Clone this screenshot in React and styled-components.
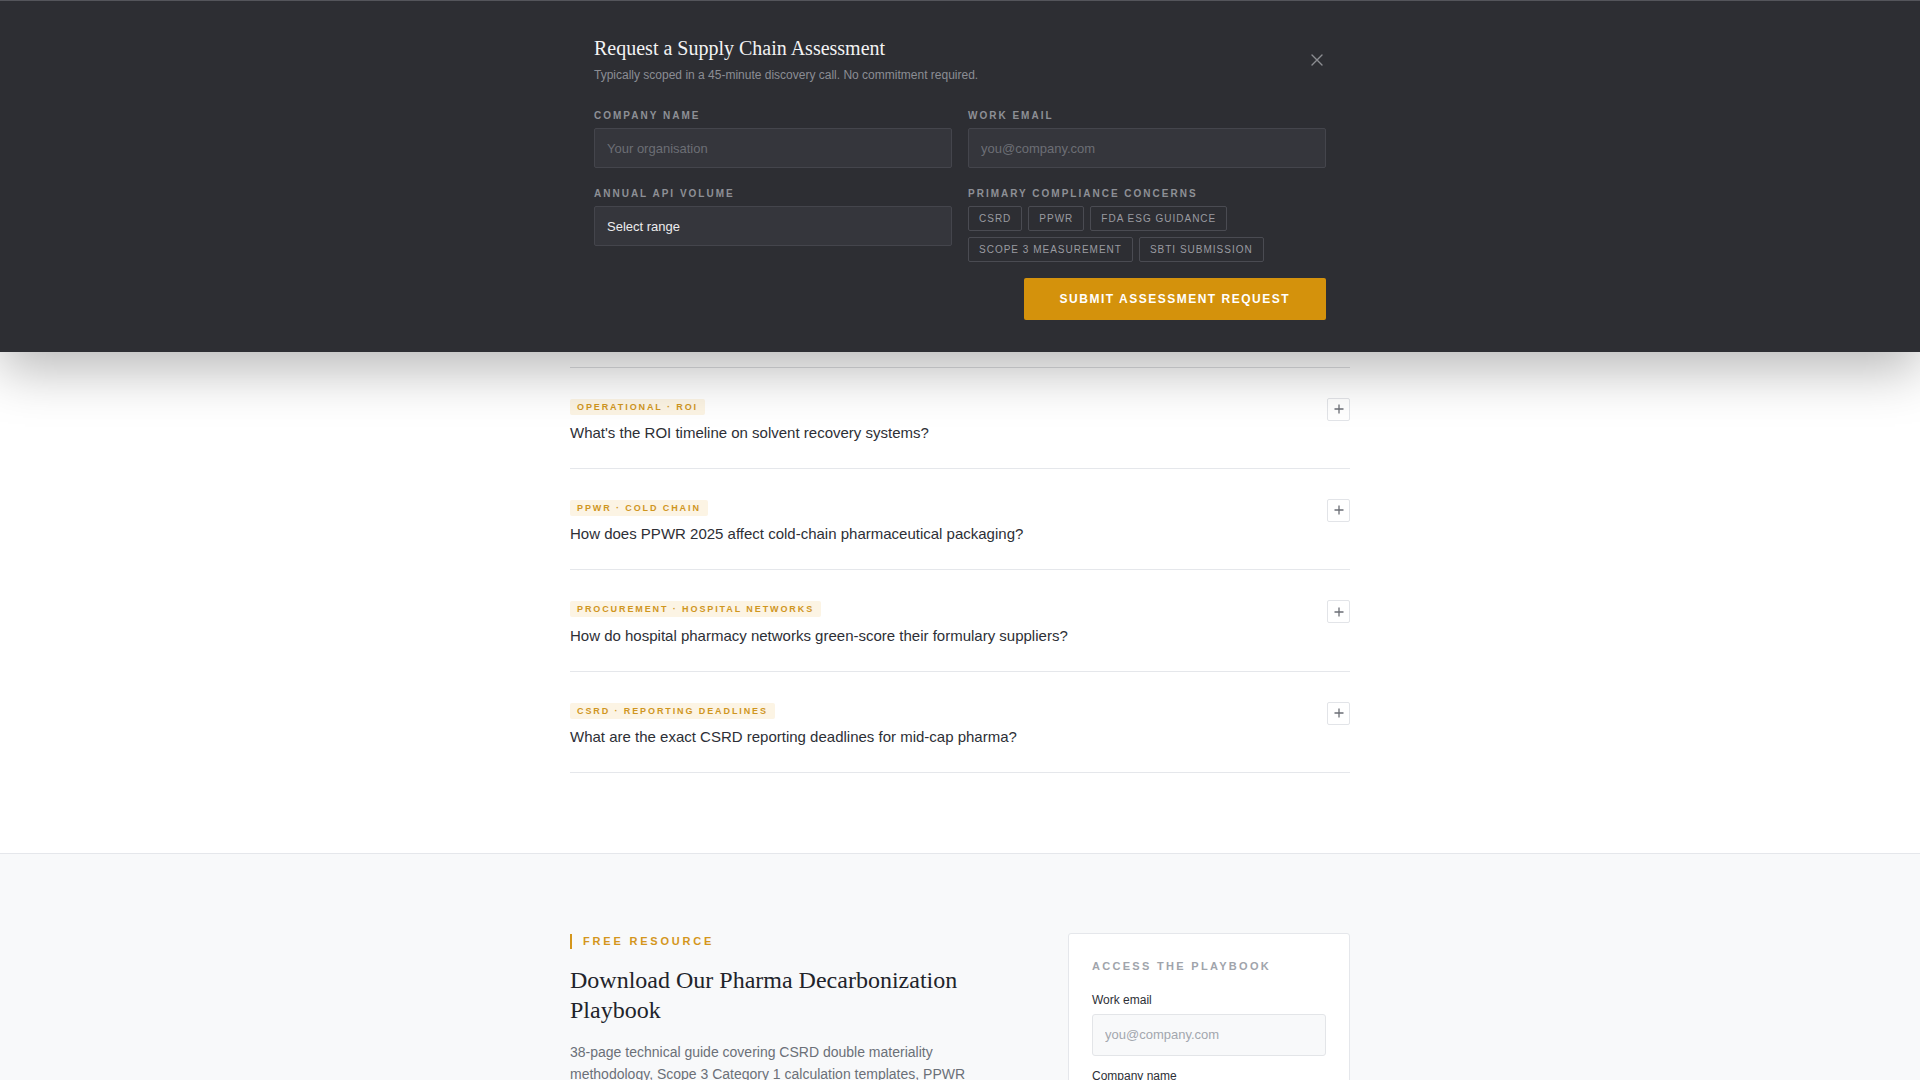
import React from "react";
import styled, { createGlobalStyle } from "styled-components";

const GlobalStyle = createGlobalStyle`
  *, *::before, *::after { box-sizing: border-box; }
  html, body { margin: 0; padding: 0; background: #ffffff; }
  body {
    font-family: "Liberation Sans", Arial, Helvetica, sans-serif;
    color: #2d2f36;
    -webkit-font-smoothing: antialiased;
  }
`;

/* ---------- Assessment request drawer ---------- */

const Drawer = styled.section`
  position: relative;
  z-index: 20;
  background: #2d2e33;
  border-top: 1px solid #54555b;
  box-shadow: 0 18px 50px rgba(0, 0, 0, 0.28);
  padding: 34px 0 32px;
`;

const DrawerInner = styled.div`
  width: 732px;
  margin: 0 auto;
`;

const DrawerHeader = styled.div`
  display: flex;
  justify-content: space-between;
  align-items: center;
`;

const DrawerTitle = styled.h2`
  margin: 0;
  font-family: "Liberation Serif", "Times New Roman", serif;
  font-weight: 400;
  font-size: 20px;
  line-height: 26px;
  color: #f3f3f4;
`;

const DrawerSub = styled.p`
  margin: 5px 0 0;
  font-size: 12px;
  line-height: 18px;
  color: #8b8d94;
`;

const CloseButton = styled.button`
  width: 16px;
  height: 16px;
  margin-right: 1px;
  padding: 0;
  border: 0;
  background: none;
  color: #8c8d92;
  display: flex;
  align-items: center;
  justify-content: center;
  cursor: pointer;
`;

const FormGrid = styled.div`
  margin-top: 25px;
  display: grid;
  grid-template-columns: 1fr 1fr;
  column-gap: 16px;
  row-gap: 19px;
  align-items: start;
`;

const Field = styled.div`
  display: flex;
  flex-direction: column;
`;

const DarkLabel = styled.label`
  font-size: 10px;
  line-height: 14px;
  font-weight: 700;
  letter-spacing: 2px;
  text-transform: uppercase;
  color: #8e9096;
  margin-bottom: 5px;
`;

const darkControl = `
  height: 40px;
  width: 100%;
  background: #35363c;
  border: 1px solid #44454c;
  border-radius: 2px;
  padding: 0 12px;
  font-family: "Liberation Sans", Arial, sans-serif;
  font-size: 13px;
  outline: none;
`;

const DarkInput = styled.input`
  ${darkControl}
  color: #e8e8ea;
  &::placeholder { color: #6c6e75; }
`;

const DarkSelect = styled.select`
  ${darkControl}
  appearance: none;
  -webkit-appearance: none;
  color: #ececee;
`;

const ChipRow = styled.div`
  display: flex;
  flex-wrap: wrap;
  gap: 6px;
`;

const Chip = styled.button`
  height: 25px;
  padding: 0 10px;
  border: 1px solid #4a4b52;
  border-radius: 2px;
  background: transparent;
  color: #9a9ba1;
  font-family: "Liberation Sans", Arial, sans-serif;
  font-size: 10px;
  letter-spacing: 1px;
  text-transform: uppercase;
  cursor: pointer;
`;

const SubmitRow = styled.div`
  display: flex;
  justify-content: flex-end;
  margin-top: 16px;
`;

const SubmitButton = styled.button`
  height: 42px;
  padding: 0 36px;
  background: #d4920c;
  border: 0;
  border-radius: 2px;
  color: #ffffff;
  font-family: "Liberation Sans", Arial, sans-serif;
  font-weight: 700;
  font-size: 12px;
  letter-spacing: 1.5px;
  text-transform: uppercase;
  cursor: pointer;
`;

/* ---------- FAQ list ---------- */

const FaqSection = styled.section`
  padding: 14.5px 0 80px;
`;

const FaqList = styled.div`
  width: 780px;
  margin: 0 auto;
  border-top: 1px solid #dcdde0;
`;

const FaqItem = styled.div`
  display: flex;
  justify-content: space-between;
  align-items: flex-start;
  padding: 31px 0 24px;
  border-bottom: 1px solid #e5e7eb;
`;

const FaqBody = styled.div`
  display: flex;
  flex-direction: column;
  align-items: flex-start;
`;

const Tag = styled.span`
  height: 16px;
  line-height: 16px;
  padding: 0 7px;
  background: #fcf4e4;
  color: #d0961e;
  font-size: 9px;
  font-weight: 700;
  letter-spacing: 1.9px;
  text-transform: uppercase;
  border-radius: 2px;
`;

const Question = styled.h3`
  margin: 7.5px 0 0;
  font-size: 15px;
  line-height: 21.85px;
  font-weight: 400;
  color: #2d2f36;
`;

const PlusButton = styled.button`
  width: 23px;
  height: 23px;
  margin-top: -1px;
  padding: 0;
  border: 1px solid #e2e4e8;
  border-radius: 2px;
  background: #ffffff;
  color: #6b6e75;
  display: flex;
  align-items: center;
  justify-content: center;
  cursor: pointer;
`;

/* ---------- Playbook download ---------- */

const ResourceSection = styled.section`
  background: #f8f9fa;
  border-top: 1px solid #e5e7eb;
  padding: 79px 0 80px;
`;

const ResourceInner = styled.div`
  width: 780px;
  margin: 0 auto;
  display: grid;
  grid-template-columns: 1fr 282px;
  column-gap: 64px;
  align-items: start;
`;

const ResourceCopy = styled.div`
  padding-top: 1px;
`;

const Eyebrow = styled.div`
  border-left: 2px solid #d4961c;
  padding-left: 11px;
  font-size: 11px;
  line-height: 15px;
  font-weight: 700;
  letter-spacing: 2.8px;
  text-transform: uppercase;
  color: #d4961c;
`;

const ResourceTitle = styled.h2`
  margin: 16px 0 0;
  font-family: "Liberation Serif", "Times New Roman", serif;
  font-weight: 400;
  font-size: 24px;
  line-height: 30px;
  color: #22242a;
`;

const ResourceText = styled.p`
  margin: 16px 0 0;
  font-size: 14px;
  line-height: 22px;
  color: #6b7078;
`;

const Card = styled.form`
  background: #ffffff;
  border: 1px solid #e5e7eb;
  border-radius: 3px;
  padding: 25px 23px 24px;
`;

const CardEyebrow = styled.div`
  font-size: 11px;
  line-height: 15px;
  font-weight: 700;
  letter-spacing: 2.3px;
  text-transform: uppercase;
  color: #a0a4ab;
`;

const CardField = styled.div`
  display: flex;
  flex-direction: column;
  margin-top: ${(p) => (p.$first ? "18px" : "12px")};
`;

const CardLabel = styled.label`
  font-size: 12px;
  line-height: 16px;
  color: #2d2f36;
  margin-bottom: 6px;
`;

const CardInput = styled.input`
  height: 42px;
  width: 100%;
  background: #f8f9fa;
  border: 1px solid #e3e5e8;
  border-radius: 3px;
  padding: 0 12px;
  font-family: "Liberation Sans", Arial, sans-serif;
  font-size: 13px;
  color: #2d2f36;
  outline: none;
  &::placeholder { color: #a3a7ae; }
`;

const CardButton = styled.button`
  margin-top: 16px;
  width: 100%;
  height: 42px;
  border: 0;
  border-radius: 2px;
  background: #2d2e33;
  color: #ffffff;
  font-family: "Liberation Sans", Arial, sans-serif;
  font-size: 11px;
  font-weight: 700;
  letter-spacing: 1.5px;
  text-transform: uppercase;
`;

const CloseIcon = () => (
  <svg width="12" height="12" viewBox="0 0 12 12" fill="none">
    <path d="M1 1L11 11M11 1L1 11" stroke="currentColor" strokeWidth="1.4" strokeLinecap="round" />
  </svg>
);

const PlusIcon = () => (
  <svg width="10" height="10" viewBox="0 0 10 10" fill="none">
    <path d="M5 0.5V9.5M0.5 5H9.5" stroke="currentColor" strokeWidth="1.3" />
  </svg>
);

const concerns = [
  "CSRD",
  "PPWR",
  "FDA ESG Guidance",
  "Scope 3 Measurement",
  "SBTi Submission",
];

const faqs = [
  { tag: "Operational · ROI", q: "What's the ROI timeline on solvent recovery systems?" },
  { tag: "PPWR · Cold Chain", q: "How does PPWR 2025 affect cold-chain pharmaceutical packaging?" },
  { tag: "Procurement · Hospital Networks", q: "How do hospital pharmacy networks green-score their formulary suppliers?" },
  { tag: "CSRD · Reporting Deadlines", q: "What are the exact CSRD reporting deadlines for mid-cap pharma?" },
];

export default function App() {
  return (
    <>
      <GlobalStyle />
      <Drawer>
        <DrawerInner>
          <DrawerHeader>
            <div>
              <DrawerTitle>Request a Supply Chain Assessment</DrawerTitle>
              <DrawerSub>Typically scoped in a 45-minute discovery call. No commitment required.</DrawerSub>
            </div>
            <CloseButton aria-label="Close">
              <CloseIcon />
            </CloseButton>
          </DrawerHeader>

          <FormGrid>
            <Field>
              <DarkLabel>Company Name</DarkLabel>
              <DarkInput placeholder="Your organisation" />
            </Field>
            <Field>
              <DarkLabel>Work Email</DarkLabel>
              <DarkInput placeholder="you@company.com" />
            </Field>
            <Field>
              <DarkLabel>Annual API Volume</DarkLabel>
              <DarkSelect defaultValue="">
                <option value="">Select range</option>
                <option>Under 10 tonnes</option>
                <option>10–100 tonnes</option>
                <option>100+ tonnes</option>
              </DarkSelect>
            </Field>
            <Field>
              <DarkLabel>Primary Compliance Concerns</DarkLabel>
              <ChipRow>
                {concerns.map((c) => (
                  <Chip key={c} type="button">{c}</Chip>
                ))}
              </ChipRow>
              <SubmitRow>
                <SubmitButton type="button">Submit Assessment Request</SubmitButton>
              </SubmitRow>
            </Field>
          </FormGrid>
        </DrawerInner>
      </Drawer>

      <FaqSection>
        <FaqList>
          {faqs.map((f) => (
            <FaqItem key={f.q}>
              <FaqBody>
                <Tag>{f.tag}</Tag>
                <Question>{f.q}</Question>
              </FaqBody>
              <PlusButton aria-label="Expand">
                <PlusIcon />
              </PlusButton>
            </FaqItem>
          ))}
        </FaqList>
      </FaqSection>

      <ResourceSection>
        <ResourceInner>
          <ResourceCopy>
            <Eyebrow>Free Resource</Eyebrow>
            <ResourceTitle>Download Our Pharma Decarbonization Playbook</ResourceTitle>
            <ResourceText>
              38-page technical guide covering CSRD double materiality methodology, Scope 3 Category 1
              calculation templates, PPWR compliance checklists, and supplier engagement frameworks used
              by leading API manufacturers.
            </ResourceText>
          </ResourceCopy>
          <Card onSubmit={(e) => e.preventDefault()}>
            <CardEyebrow>Access the Playbook</CardEyebrow>
            <CardField $first>
              <CardLabel>Work email</CardLabel>
              <CardInput placeholder="you@company.com" />
            </CardField>
            <CardField>
              <CardLabel>Company name</CardLabel>
              <CardInput placeholder="Your organisation" />
            </CardField>
            <CardButton type="submit">Send me the playbook</CardButton>
          </Card>
        </ResourceInner>
      </ResourceSection>
    </>
  );
}
